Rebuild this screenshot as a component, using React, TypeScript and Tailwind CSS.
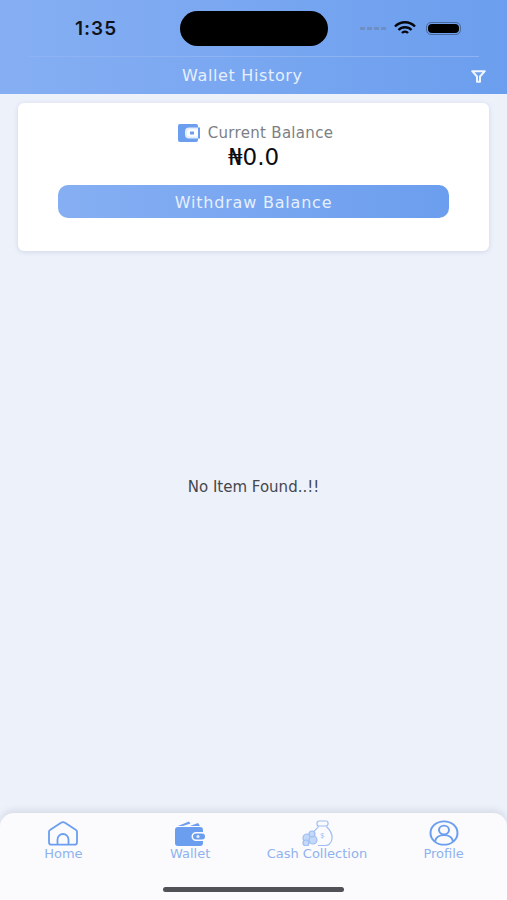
import React from "react";

const font = "font-['DejaVu_Sans',sans-serif]";

const WalletSmall = () => (
	<svg width="22" height="18" viewBox="0 0 22 18">
		<rect x="0" y="0" width="20" height="18" rx="2" fill="#6b9eee" />
		<path d="M22 3.500H11a4 4 0 0 0-4 4v3a4 4 0 0 0 4 4h11z" fill="#e4edfc" />
		<path d="M22 5.500H11.500a2.500 2.500 0 0 0-2.500 2.500v2a2.500 2.500 0 0 0 2.500 2.500H22z" fill="#fff" />
		<rect x="12" y="7.500" width="4" height="3" fill="#6b9eee" />
		<rect x="20" y="3.500" width="2" height="11" fill="#6b9eee" />
	</svg>
);

const HomeIcon = () => (
	<svg width="30" height="25" viewBox="0 0 30 25" fill="none" stroke="#6b9eee" strokeWidth="1.800">
		<path d="M2 9 13 1.800a3.500 3.500 0 0 1 4 0L28 9a2 2 0 0 1 1 1.700v10.500a2.500 2.500 0 0 1-2.500 2.500h-23A2.500 2.500 0 0 1 1 21.200V10.700A2 2 0 0 1 2 9z" />
		<path d="M9.500 23.500V18.500a5.500 5.500 0 0 1 11 0v5" />
	</svg>
);

const WalletIcon = () => (
	<svg width="31" height="26" viewBox="0 0 31 26">
		<path d="M3 6 14 1.500l1.500 2L8 6z" fill="#6b9eee" />
		<path d="M15 6l8-3 2 3z" fill="#6b9eee" />
		<path d="M3 7h22a3 3 0 0 1 3 3v2h-7a4.500 4.500 0 0 0 0 9h7v2a3 3 0 0 1-3 3H3a3 3 0 0 1-3-3V10a3 3 0 0 1 3-3z" fill="#6b9eee" />
		<rect x="18" y="13.500" width="12" height="6" rx="3" fill="#6b9eee" />
		<circle cx="23" cy="16.500" r="1.500" fill="#e8f0fd" />
	</svg>
);

const CashIcon = () => (
	<svg width="32" height="26" viewBox="0 0 32 26" fill="none" stroke="#9dbdf4" strokeWidth="1.200">
		<path d="M18 1h7a2 2 0 0 1 2 2v1a2 2 0 0 1-2 2h-7a2 2 0 0 1-2-2V3a2 2 0 0 1 2-2z" />
		<path d="M17.500 6.500c-2 3-6 5-6.500 9M25.500 6.500c3 3 6 7 5.500 12-.3 4-3 7-7 7h-7" />
		<text x="19" y="18" fontSize="8" fill="#9dbdf4" stroke="none" fontFamily="Open Sans">$</text>
		<circle cx="6" cy="18" r="4" fill="#c4d8f8" />
		<circle cx="12" cy="20" r="4" fill="#c4d8f8" />
		<circle cx="5" cy="23" r="3" fill="#c4d8f8" />
		<circle cx="11" cy="14" r="3" fill="#c4d8f8" />
	</svg>
);

const ProfileIcon = () => (
	<svg width="30" height="26" viewBox="0 0 30 30" fill="none" stroke="#6b9eee" strokeWidth="2" preserveAspectRatio="none">
		<circle cx="15" cy="15" r="13.500" />
		<circle cx="15" cy="11.500" r="5" />
		<path d="M6 24.500c1-5 5-7 9-7s8 2 9 7" />
	</svg>
);

const tabs = [
	{ label: "Home", icon: <HomeIcon /> },
	{ label: "Wallet", icon: <WalletIcon /> },
	{ label: "Cash Collection", icon: <CashIcon /> },
	{ label: "Profile", icon: <ProfileIcon /> },
];

const App: React.FC = () => {
	return (
		<div className={`${font} w-[507px] h-[900px] flex flex-col bg-[#edf1fa] overflow-hidden`}>
			<header className="h-[94px] shrink-0 bg-gradient-to-r from-[#86aff3] to-[#6b9eee] flex flex-col">
				<div className="h-[57px] mx-[28px] border-b border-[#8db3f2] flex items-center pt-[1px]">
					<span className="ml-[47px] w-[105px] pt-[1px] text-[19px] tracking-[1px] font-semibold text-[#10131a] font-['Inter',sans-serif]">1:35</span>
					<div className="w-[148px] h-[35px] rounded-full bg-black" />
					<div className="ml-[32px] flex gap-[2px]">
						<span className="w-[5px] h-[3px] bg-[#6f8fc4]" />
						<span className="w-[5px] h-[3px] bg-[#6f8fc4]" />
						<span className="w-[5px] h-[3px] bg-[#6f8fc4]" />
						<span className="w-[5px] h-[3px] bg-[#6f8fc4]" />
					</div>
					<svg className="ml-[8px]" width="22" height="15" viewBox="0 0 22 15" fill="none" stroke="#05070c" strokeWidth="2.400">
						<path d="M1 5.500a14 14 0 0 1 20 0" />
						<path d="M4.500 9a9 9 0 0 1 13 0" />
						<path d="M8 12a4 4 0 0 1 6 0" />
					</svg>
					<div className="ml-[10px] w-[35px] h-[13px] rounded-[5px] border border-[#4a6a9c] p-[1px]">
						<div className="w-full h-full rounded-[4px] bg-black" />
					</div>
				</div>
				<div className="flex-1 flex items-center pl-[182px] pr-[21px] justify-between pt-[1px]">
					<span className="text-[16px] tracking-[0.65px] text-[#e6effd]">Wallet History</span>
					<svg width="15" height="13" viewBox="0 0 15 13" fill="none" stroke="#f1f6fe" strokeWidth="2" strokeLinejoin="round">
						<path d="M1.200 1.200h12.600L9 6.500v5.300H6v-5.300z" />
					</svg>
				</div>
			</header>

			<main className="flex-1 flex flex-col px-[18px] pt-[9px]">
				<section className="h-[148px] bg-white rounded-[6px] shadow-[0_1px_5px_rgba(90,110,150,0.2)] flex flex-col items-center pt-[20px]">
					<div className="flex items-center gap-[8px] h-[20px] ml-[4px]">
						<WalletSmall />
						<span className="text-[15px] tracking-[0.3px] text-[#7d7f85]">Current Balance</span>
					</div>
					<div className="text-[23px] leading-[28px] font-medium text-[#0c0d10]">₦0.0</div>
					<button className="mt-[14px] w-[391px] h-[33px] pt-[2px] rounded-[10px] bg-gradient-to-r from-[#86aff3] to-[#6b9eee] text-[16px] tracking-[0.8px] text-[#e6effd]">
						Withdraw Balance
					</button>
				</section>
				<div className="flex-1 flex items-center justify-center pb-[89px]">
					<span className="text-[15px] text-[#45474d]">No Item Found..!!</span>
				</div>
			</main>

			<nav className="h-[87px] shrink-0 bg-[#fbfbfd] rounded-t-[14px] shadow-[0_-3px_6px_rgba(90,100,130,0.15)] flex flex-col">
				<div className="grid grid-cols-4 pt-[7px]">
					{tabs.map((tab) => (
						<div key={tab.label} className="flex flex-col items-center">
							<div className="h-[26px] flex items-center">{tab.icon}</div>
							<span className="text-[13px] leading-[14px] mt-[1px] text-[#8fb2ee] whitespace-nowrap">{tab.label}</span>
						</div>
					))}
				</div>
				<div className="mt-[26px] mx-auto w-[181px] h-[5px] rounded-full bg-[#505258]" />
			</nav>
		</div>
	);
};

export default App;
